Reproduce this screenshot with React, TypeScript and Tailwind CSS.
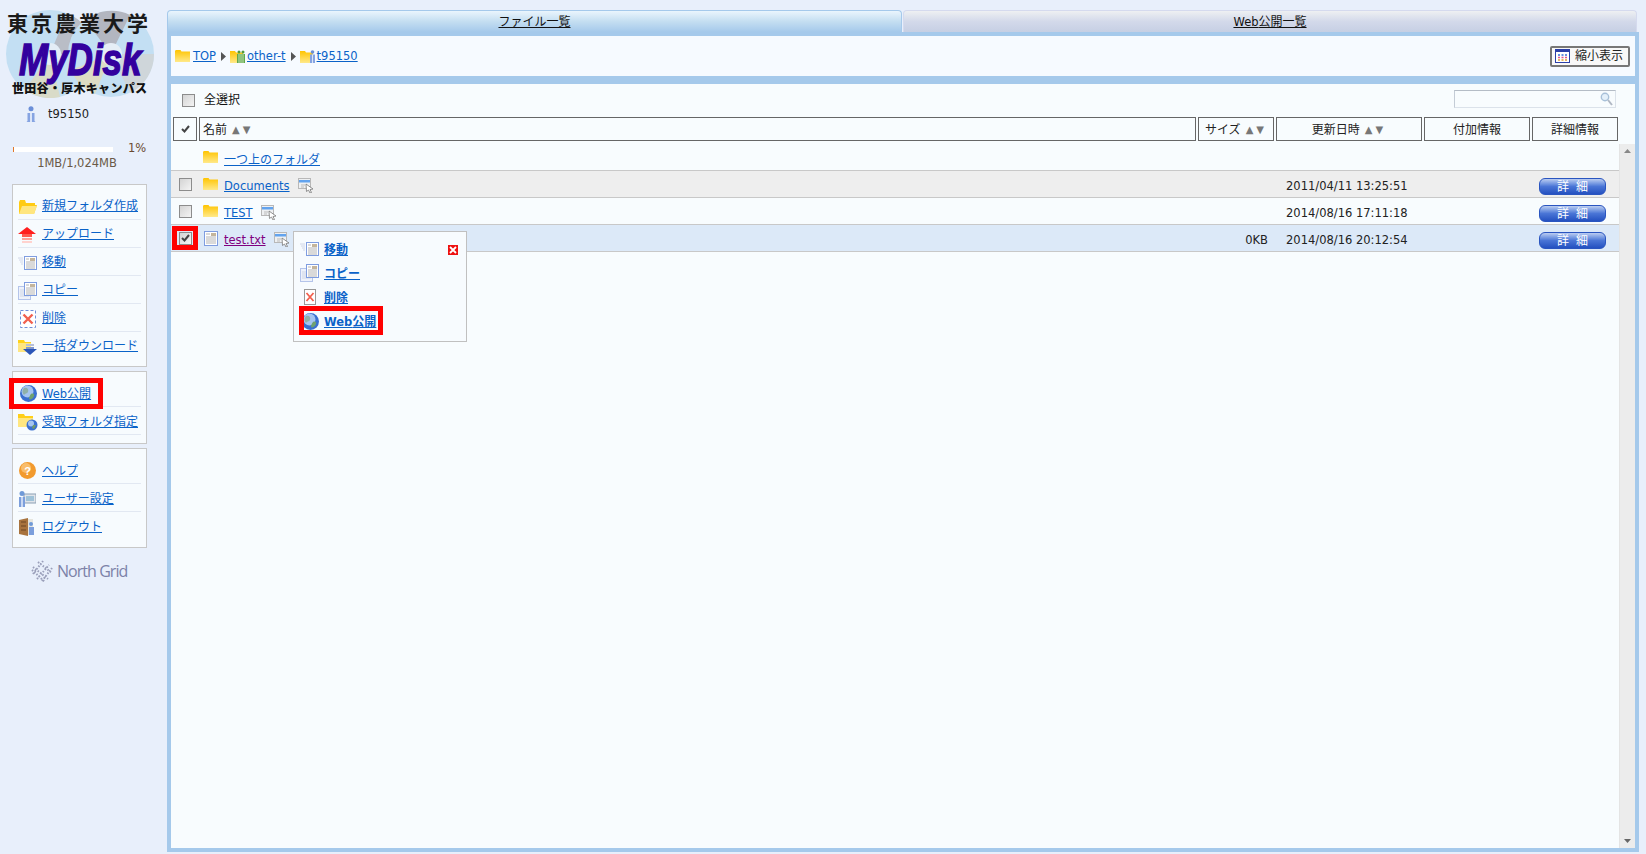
import React from "react";

const J = ({ children, className = "" }: { children: React.ReactNode; className?: string }) => (
  <span className={`text-[12px] ${className}`}>{children}</span>
);

const FolderGrad = () => (
  <defs>
    <linearGradient id="fg" x1="0" y1="0" x2="0" y2="1">
      <stop offset="0" stopColor="#ffc400" />
      <stop offset="1" stopColor="#ffe98a" />
    </linearGradient>
  </defs>
);

const Folder = ({ className = "" }: { className?: string }) => (
  <svg width="15" height="12" viewBox="0 0 15 12" className={`shrink-0 ${className}`}>
    <FolderGrad />
    <path d="M0 1 L0.8 0 H5.5 L6.5 1.5 H15 V12 H0 Z" fill="url(#fg)" />
  </svg>
);

const OpenFolder = () => (
  <svg width="20" height="16" viewBox="0 0 20 16">
    <path d="M1 3 V15 H16 L19 6 H17 V4 H8 L7 1 H2 Z" fill="#ffcb14" />
    <path d="M4 7 H19 L16 15 H1 Z" fill="#ffe680" />
  </svg>
);

const Doc = ({ size = 14 }: { size?: number }) => (
  <svg width={size} height={size + 1} viewBox="0 0 14 15" className="shrink-0">
    <rect x="0.5" y="0.5" width="13" height="14" fill="#fff" stroke="#7f9de0" />
    <rect x="7" y="2" width="5" height="3" fill="#c4b59c" />
    <path d="M2 3h4M2 6h10M2 8h10M2 10h10M2 12h10" stroke="#b4b4b4" />
  </svg>
);

const MoveIcon = () => (
  <svg width="20" height="16" viewBox="0 0 20 16">
    <path d="M0 3h5M1 5h4M2 7h3M3 9h2" stroke="#d0d6e8" />
    <rect x="6.5" y="1.5" width="12" height="13" fill="#fff" stroke="#7f9de0" />
    <rect x="12" y="3" width="5" height="3" fill="#c4b59c" />
    <path d="M8 4h3M8 7h9M8 9h9M8 11h9M8 13h9" stroke="#b4b4b4" />
  </svg>
);

const CopyIcon = () => (
  <svg width="20" height="18" viewBox="0 0 20 18">
    <rect x="0.5" y="4.5" width="12" height="13" fill="#eef2fb" stroke="#b4c4ea" />
    <path d="M2 8h9M2 10h9M2 12h9M2 14h9" stroke="#cfd6e6" />
    <rect x="6.5" y="0.5" width="12" height="13" fill="#fff" stroke="#7f9de0" />
    <rect x="12" y="2" width="5" height="3" fill="#c4b59c" />
    <path d="M8 3h3M8 6h9M8 8h9M8 10h9M8 12h9" stroke="#b4b4b4" />
  </svg>
);

const DeleteIcon = () => (
  <svg width="16" height="18" viewBox="0 0 16 18">
    <rect x="0.5" y="0.5" width="15" height="17" fill="#fff" stroke="#6f8fd8" strokeDasharray="3 2" />
    <path d="M3.5 4.5 L12.5 13.5 M12.5 4.5 L3.5 13.5" stroke="#f2604e" strokeWidth="2.4" />
  </svg>
);

const DeleteSmall = () => (
  <svg width="12" height="16" viewBox="0 0 12 16">
    <rect x="0.5" y="0.5" width="11" height="15" fill="#fff" stroke="#999" />
    <path d="M2.5 4 L9.5 12 M9.5 4 L2.5 12" stroke="#f2604e" strokeWidth="1.8" />
  </svg>
);

const UpIcon = () => (
  <svg width="18" height="16" viewBox="0 0 18 16">
    <path d="M9 0 L18 7 H0 Z" fill="#ff1f1f" />
    <rect x="4" y="7" width="10" height="3" fill="#ff5a50" />
    <rect x="4" y="11" width="10" height="2" fill="#ff9f98" />
    <rect x="4" y="14" width="10" height="2" fill="#ffd2ce" />
  </svg>
);

const DownloadIcon = () => (
  <svg width="20" height="16" viewBox="0 0 20 16">
    <path d="M0 1 H6 L7 3 H13 V13 H0 Z" fill="#ffd21a" />
    <path d="M0 4 H13 V13 H0 Z" fill="#ffe680" />
    <rect x="8" y="5" width="8" height="2" fill="#b5bfd8" />
    <rect x="8" y="8" width="8" height="2" fill="#7f95cc" />
    <path d="M5 10 H19 L12 16 Z" fill="#2a55b8" />
  </svg>
);

const Globe = ({ size = 17 }: { size?: number }) => (
  <svg width={size} height={size} viewBox="0 0 17 17" className="shrink-0">
    <circle cx="8.5" cy="8.5" r="8.5" fill="#3a6fd0" />
    <circle cx="7.5" cy="6.5" r="6" fill="#a5c4f0" />
    <path d="M4 3 C7 2 9 4 8 7 C7 9 5 8 4 10 C2 8 2 5 4 3 Z" fill="#8fb0a8" />
    <path d="M11 9 C13 8 15 9 14 11 C13 14 10 15 9 14 C9 12 10 10 11 9 Z" fill="#6fa070" />
  </svg>
);

const RecvIcon = () => (
  <svg width="20" height="18" viewBox="0 0 20 18">
    <path d="M0 1 H6 L7 3 H15 V14 H0 Z" fill="#ffcf1a" />
    <path d="M0 5 H15 V14 H0 Z" fill="#ffe680" />
    <circle cx="14" cy="12" r="5.5" fill="#3a6fd0" />
    <circle cx="13" cy="10.5" r="3" fill="#a5c4f0" />
    <path d="M15 12 L18 12 L16 16 L14 15 Z" fill="#6f9a6a" />
  </svg>
);

const HelpIcon = () => (
  <svg width="17" height="17" viewBox="0 0 17 17">
    <circle cx="8.5" cy="8.5" r="8.5" fill="#f29a2e" />
    <circle cx="7" cy="6" r="5" fill="#f9bd6b" />
    <text x="8.5" y="12.5" textAnchor="middle" fontSize="11" fontWeight="bold" fill="#fff" fontFamily="Liberation Sans">?</text>
  </svg>
);

const UserSetIcon = () => (
  <svg width="18" height="16" viewBox="0 0 18 16">
    <rect x="6" y="3" width="12" height="9" fill="#dfe4ea" stroke="#8ca0b4" />
    <rect x="8" y="5" width="8" height="5" fill="#9fc2d8" />
    <circle cx="4" cy="2.5" r="2.5" fill="#6f9ad8" />
    <path d="M1 6 H7 V16 H1 Z" fill="#7c9fdc" />
    <rect x="3" y="6" width="2" height="10" fill="#c9d8f2" />
  </svg>
);

const LogoutIcon = () => (
  <svg width="16" height="18" viewBox="0 0 16 18">
    <path d="M0 2 L9 0 V18 L0 16 Z" fill="#a8733e" />
    <path d="M2 4 H7 M2 8 H7 M2 12 H7" stroke="#6d4622" />
    <rect x="9" y="1" width="5" height="16" fill="#e6e6e0" />
    <circle cx="12" cy="6" r="2" fill="#6f9ad8" />
    <path d="M10 9 H15 V17 H10 Z" fill="#7c9fdc" />
  </svg>
);

const InfoPerson = () => (
  <svg width="10" height="17" viewBox="0 0 10 17">
    <circle cx="5" cy="2.7" r="2.5" fill="#6b8fd8" />
    <path d="M1.5 7 H8.5 V15 L9.5 16 H0.5 L1.5 15 Z" fill="#86a4e2" />
    <rect x="4" y="7" width="2" height="9" fill="#dbe5f8" />
  </svg>
);

const RowAction = () => (
  <svg width="16" height="15" viewBox="0 0 16 15" className="shrink-0">
    <rect x="0.5" y="0.5" width="12" height="10" fill="#eef0f2" stroke="#b8b8b8" />
    <rect x="1" y="2" width="11" height="2.5" fill="#62a3ee" />
    <path d="M3 7h4M3 9h3" stroke="#bbb" />
    <path d="M8 6 L15 11 L12 11.5 L13.5 14.5 L12 15 L10.5 12 L8.5 13.5 Z" fill="#fff" stroke="#777" strokeWidth="0.8" />
  </svg>
);

const Check = () => (
  <svg width="9" height="8" viewBox="0 0 9 8">
    <path d="M1 4 L3.5 6.5 L8 1" fill="none" stroke="#444" strokeWidth="2" />
  </svg>
);

const CheckBox = ({ checked = false }: { checked?: boolean }) => (
  <span className="flex h-[13px] w-[13px] shrink-0 items-center justify-center border border-[#8c8c8c] bg-gradient-to-br from-[#d4d4d4] to-[#f4f4f4]">
    {checked && <Check />}
  </span>
);

const Crumbs = ({ kind }: { kind: "group" | "user" }) => (
  <svg width="16" height="13" viewBox="0 0 16 13" className="shrink-0">
    <FolderGrad />
    <path d="M0 1 H5 L6 2.5 H13 V13 H0 Z" fill="url(#fg)" />
    {kind === "group" ? (
      <g>
        <circle cx="9" cy="2" r="1.5" fill="#4f9a3f" />
        <circle cx="13" cy="2" r="1.5" fill="#4f9a3f" />
        <rect x="7" y="4" width="8" height="9" fill="#5fa84a" />
        <path d="M9 4v9M11 4v9M13 4v9" stroke="#dbeed0" strokeWidth="0.8" />
      </g>
    ) : (
      <g>
        <circle cx="12.5" cy="2" r="1.8" fill="#6b8fd8" />
        <rect x="10" y="4.5" width="5" height="8.5" fill="#86a4e2" />
        <rect x="12" y="4.5" width="1" height="8.5" fill="#dbe5f8" />
      </g>
    )}
  </svg>
);

const Arrow = () => (
  <svg width="5" height="9" viewBox="0 0 5 9" className="shrink-0">
    <path d="M0 0 L5 4.5 L0 9 Z" fill="#555" />
  </svg>
);

const MenuRow = ({
  icon,
  label,
  last,
  tight,
  iconClass = "",
}: {
  icon: React.ReactNode;
  label: React.ReactNode;
  last?: boolean;
  tight?: boolean;
  iconClass?: string;
}) => (
  <div className={`mx-[5px] flex h-[28px] items-center ${last ? "" : "border-b border-[#e2e8f2]"}`}>
    <span className={`mt-[2px] flex w-[24px] shrink-0 items-center justify-start ${iconClass}`}>{icon}</span>
    <a className={`${tight ? "mt-[1px]" : "mt-[3px]"} text-[#0a62c8] underline`}>{label}</a>
  </div>
);

const Box = ({ children, className = "" }: { children: React.ReactNode; className?: string }) => (
  <div className={`ml-[12px] w-[135px] border border-[#c8c8c8] bg-[#f7fbfe] pt-[7px] ${className}`}>{children}</div>
);

const Sort = () => (
  <span className="ml-[5px] text-[10px] tracking-[3px] text-[#777]">▲▼</span>
);

const HeaderCell = ({ children, className = "" }: { children: React.ReactNode; className?: string }) => (
  <div className={`flex h-[24px] shrink-0 items-center justify-center border border-[#666] pt-[2px] text-[#222] ${className}`}>{children}</div>
);

const DetailBtn = () => (
  <span className="mt-[5px] flex h-[17px] w-[67px] shrink-0 items-center justify-center rounded-[6px] border border-[#2a55c0] bg-gradient-to-b from-[#bccdf0] via-[#4a75d6] to-[#2450c0] text-[12px] tracking-[7px] text-white">
    <span className="ml-[7px]">詳細</span>
  </span>
);

const Row = ({
  check,
  icon,
  name,
  size,
  date,
  action = true,
  nameClass = "text-[#0a62c8]",
  className = "",
}: {
  check?: React.ReactNode;
  icon: React.ReactNode;
  name: React.ReactNode;
  size?: string;
  date?: string;
  action?: boolean;
  nameClass?: string;
  className?: string;
}) => (
  <div className={`flex h-[27px] items-center border-b border-[#c8c8c8] ${className}`}>
    <span className="ml-[8px] flex w-[13px] shrink-0">{check}</span>
    <span className="ml-[11px] flex w-[15px] shrink-0 items-center justify-center">{icon}</span>
    <a className={`ml-[6px] mt-[6px] underline ${nameClass}`}>{name}</a>
    {action && <span className="ml-[8px] mt-[2px] flex"><RowAction /></span>}
    <span className="flex-1" />
    {size && <span className="mt-[6px] text-[#222]">{size}</span>}
    {date && (
      <>
        <span className="ml-[18px] mt-[6px] w-[253px] text-[#222]">{date}</span>
        <DetailBtn />
        <span className="w-[13px] shrink-0" />
      </>
    )}
  </div>
);

const PopItem = ({ icon, label }: { icon: React.ReactNode; label: React.ReactNode }) => (
  <div className="flex h-[24px] items-center">
    <span className="flex w-[30px] shrink-0 items-center justify-center pl-[2px]">{icon}</span>
    <a className="mt-[2px] font-bold text-[#0a62c8] underline">{label}</a>
  </div>
);

const Logo = () => (
  <svg width="150" height="88" viewBox="0 0 150 88" className="ml-[5px] mt-[10px] block">
    <circle cx="45" cy="44" r="44" fill="#c3dff3" />
    <path d="M45 44 L62 3 A44 44 0 0 1 89 44 Z" fill="#b9bdc6" />
    <path d="M45 44 L20 80 A44 44 0 0 0 55 87 Z" fill="#d9dbc8" />
    <circle cx="106" cy="44" r="43" fill="#c3dff3" />
    <path d="M106 44 L80 10 A43 43 0 0 1 125 5 Z" fill="#b3b6c0" />
    <path d="M106 44 L125 83 A43 43 0 0 0 149 44 Z" fill="#cfd6da" />
    <path d="M106 44 L66 60 A43 43 0 0 0 90 84 Z" fill="#dcdcc4" />
    <circle cx="45" cy="44" r="11" fill="#e4edf6" />
    <circle cx="106" cy="44" r="11" fill="#e6eef6" />
    <text x="2" y="21" fontSize="21" fontWeight="700" fill="#1a1a1a" letterSpacing="3" fontFamily="'Noto Sans CJK JP', sans-serif">東京農業大学</text>
    <g transform="translate(14 65) scale(1 1.25)">
      <text x="0" y="0" fontSize="35" fontWeight="bold" fontStyle="italic" fill="#33009e" stroke="#33009e" strokeWidth="1.2" fontFamily="'Liberation Sans', sans-serif">MyDisk</text>
    </g>
    <text x="7" y="83" fontSize="12" fontWeight="900" fill="#111" letterSpacing="0.3" fontFamily="'Noto Sans CJK JP', sans-serif">世田谷・厚木キャンパス</text>
  </svg>
);

const NorthGridMark = () => (
  <svg width="23" height="24" viewBox="0 0 23 24">
    <path d="M3 15 L13 2 M7 20 L19 6 M3 8 L18 20 M8 3 L22 14 M2 11 L15 23 M12 22 L22 9" stroke="#9a9fba" strokeWidth="2" strokeDasharray="1.5 1.5" fill="none" />
  </svg>
);

export default function App() {
  return (
    <div className="flex h-[854px] w-[1646px] overflow-hidden bg-[#e8effb] font-['DejaVu_Sans','Noto_Sans_CJK_JP',sans-serif] text-[11.5px] leading-none text-[#222]">
      <aside className="flex w-[167px] shrink-0 flex-col">
        <Logo />
        <div className="mt-[8px] flex h-[17px] items-center pl-[26px]">
          <InfoPerson />
          <span className="ml-[12px] text-[#222]">t95150</span>
        </div>
        <div className="mt-[20px] flex h-[12px] items-center pl-[13px]">
          <div className="h-[5px] w-[100px] bg-white">
            <div className="h-full w-[1px] bg-[#e0772a]" />
          </div>
          <span className="ml-[15px] text-[#6a4a30]">1%</span>
        </div>
        <div className="mt-[2px] flex h-[14px] w-[154px] items-center justify-center text-[#6a5a48]">1MB/1,024MB</div>
        <div className="mt-[13px] flex flex-col">
          <Box className="h-[183px]">
            <MenuRow tight icon={<OpenFolder />} label={<J>新規フォルダ作成</J>} />
            <MenuRow tight icon={<UpIcon />} label={<J>アップロード</J>} />
            <MenuRow tight icon={<MoveIcon />} label={<J>移動</J>} />
            <MenuRow tight icon={<CopyIcon />} label={<J>コピー</J>} />
            <MenuRow tight icon={<DeleteIcon />} label={<J>削除</J>} iconClass="pl-[2px]" />
            <MenuRow tight icon={<DownloadIcon />} label={<J>一括ダウンロード</J>} last />
          </Box>
          <Box className="relative mt-[4px] h-[73px]">
            <MenuRow icon={<Globe />} label={<>Web<J>公開</J></>} iconClass="pl-[2px]" />
            <MenuRow icon={<RecvIcon />} label={<J>受取フォルダ指定</J>} />
            <div className="absolute left-[-4px] top-[6px] h-[31px] w-[94px] border-[5px] border-[#ff0000]" />
          </Box>
          <Box className="mt-[4px] h-[100px]">
            <MenuRow icon={<HelpIcon />} label={<J>ヘルプ</J>} iconClass="pl-[1px]" />
            <MenuRow icon={<UserSetIcon />} label={<J>ユーザー設定</J>} />
            <MenuRow icon={<LogoutIcon />} label={<J>ログアウト</J>} iconClass="pl-[1px]" last />
          </Box>
        </div>
        <div className="ml-[30px] mt-[11px] flex items-center">
          <NorthGridMark />
          <span className="ml-[4px] font-['Open_Sans',sans-serif] text-[16px] tracking-[-0.95px] text-[#7c82a8]">North Grid</span>
        </div>
      </aside>

      <main className="mt-[10px] flex h-[842px] w-[1472px] shrink-0 flex-col">
        <div className="flex h-[22px] shrink-0">
          <div className="flex w-[735px] justify-center rounded-t-[4px] border border-b-0 border-[#a5c9eb] bg-gradient-to-b from-[#eaf5fd] via-[#c4def1] to-[#a5c9eb] pt-[5px] text-[#111]">
            <a className="underline"><J>ファイル一覧</J></a>
          </div>
          <div className="ml-[1px] flex w-[734px] justify-center rounded-t-[4px] border border-b-0 border-[#d5daee] bg-gradient-to-b from-[#eef0f2] via-[#d3d9ea] to-[#c6cfe4] pt-[5px] text-[#111]">
            <a className="underline">Web<J>公開一覧</J></a>
          </div>
        </div>
        <div className="flex h-[820px] flex-col border-4 border-[#a5c9eb]">
          <div className="flex h-[40px] shrink-0 items-center bg-[#f6faff] pl-[4px]">
            <Folder />
            <a className="ml-[3px] mt-[1px] text-[#0a62c8] underline">TOP</a>
            <span className="ml-[5px] flex"><Arrow /></span>
            <span className="ml-[4px] flex"><Crumbs kind="group" /></span>
            <a className="ml-[1px] mt-[1px] text-[#0a62c8] underline">other-t</a>
            <span className="ml-[5px] flex"><Arrow /></span>
            <span className="ml-[4px] flex"><Crumbs kind="user" /></span>
            <a className="ml-[1px] mt-[1px] text-[#0a62c8] underline">t95150</a>
            <div className="ml-auto mr-[5px] flex h-[21px] w-[80px] items-center rounded-[2px] border-2 border-[#777] bg-[#f8f8f8] pl-[3px]">
              <svg width="15" height="14" viewBox="0 0 15 14" className="shrink-0">
                <rect x="0.5" y="0.5" width="14" height="13" fill="#fff" stroke="#2b3fa8" />
                <rect x="1" y="1" width="13" height="2" fill="#2b3fa8" />
                <path d="M3 6h2M6.5 6h2M10 6h2" stroke="#3a6fd8" strokeWidth="1.5" />
                <path d="M3 8.5h2M6.5 8.5h2M10 8.5h2" stroke="#e0558a" strokeWidth="1.5" />
                <path d="M3 11h2M6.5 11h2M10 11h2" stroke="#e0a030" strokeWidth="1.5" />
              </svg>
              <J className="ml-[5px] text-[#222]">縮小表示</J>
            </div>
          </div>
          <div className="flex min-h-0 flex-1 flex-col border-t-8 border-[#a5c9eb] bg-[#f8fcfe]">
            <div className="flex h-[33px] shrink-0 items-center pl-[11px]">
              <CheckBox />
              <J className="mb-[2px] ml-[9px] text-[#111]">全選択</J>
              <div className="ml-auto mr-[19px] mt-[-3px] flex h-[18px] w-[162px] items-center justify-end border border-[#dbe2ea] border-l-[#c4ccd6] border-t-[#b4bcc6] bg-[#f8fcfe] pr-[2px]">
                <svg width="13" height="14" viewBox="0 0 13 14">
                  <circle cx="5" cy="5" r="3.7" fill="#e4f0fa" stroke="#a8c0d8" strokeWidth="1.4" />
                  <path d="M8 8 L12 13" stroke="#b0b8c4" strokeWidth="2" />
                </svg>
              </div>
            </div>
            <div className="flex shrink-0 gap-[2px] pl-[2px] text-[12px]">
              <HeaderCell className="w-[24px] !pt-0"><Check /></HeaderCell>
              <HeaderCell className="w-[997px] justify-start pl-[3px]">名前<Sort /></HeaderCell>
              <HeaderCell className="w-[76px]">サイズ<Sort /></HeaderCell>
              <HeaderCell className="w-[146px]">更新日時<Sort /></HeaderCell>
              <HeaderCell className="w-[106px]">付加情報</HeaderCell>
              <HeaderCell className="w-[86px]">詳細情報</HeaderCell>
            </div>
            <div className="mt-[3px] flex min-h-0 flex-1">
              <div className="relative flex-1">
                <Row icon={<Folder />} name={<J>一つ上のフォルダ</J>} action={false} />
                <Row check={<CheckBox />} icon={<Folder />} name="Documents" date="2011/04/11 13:25:51" className="bg-[#eeeeee]" />
                <Row check={<CheckBox />} icon={<Folder />} name="TEST" date="2014/08/16 17:11:18" />
                <Row check={<CheckBox checked />} icon={<Doc />} name="test.txt" nameClass="text-[#800080]" size="0KB" date="2014/08/16 20:12:54" className="bg-[#dce9f8]" />
                <div className="absolute left-[1px] top-[82px] h-[24px] w-[26px] border-[5px] border-[#ff0000]" />
                <div className="absolute left-[122px] top-[87px] h-[111px] w-[174px] border border-[#c0c0c0] bg-[#f7fbfe] pt-[5px]">
                  <PopItem icon={<MoveIcon />} label={<J>移動</J>} />
                  <PopItem icon={<CopyIcon />} label={<J>コピー</J>} />
                  <PopItem icon={<DeleteSmall />} label={<J>削除</J>} />
                  <PopItem icon={<Globe />} label={<>Web<J>公開</J></>} />
                  <div className="absolute left-[154px] top-[13px] flex h-[10px] w-[10px] items-center justify-center bg-[#ee1111]">
                    <svg width="8" height="8" viewBox="0 0 8 8"><path d="M1 1 L7 7 M7 1 L1 7" stroke="#fff" strokeWidth="1.8" /></svg>
                  </div>
                  <div className="absolute left-[5px] top-[74px] h-[29px] w-[84px] border-[5px] border-[#ff0000]" />
                </div>
              </div>
              <div className="flex w-[16px] shrink-0 flex-col items-center justify-between border-l border-[#e4e4e4] bg-[#ececec] pb-[5px] pt-[5px]">
                <svg width="7" height="4" viewBox="0 0 7 4"><path d="M3.5 0 L7 4 H0 Z" fill="#888" /></svg>
                <svg width="7" height="4" viewBox="0 0 7 4"><path d="M0 0 H7 L3.5 4 Z" fill="#666" /></svg>
              </div>
            </div>
          </div>
        </div>
      </main>
    </div>
  );
}
